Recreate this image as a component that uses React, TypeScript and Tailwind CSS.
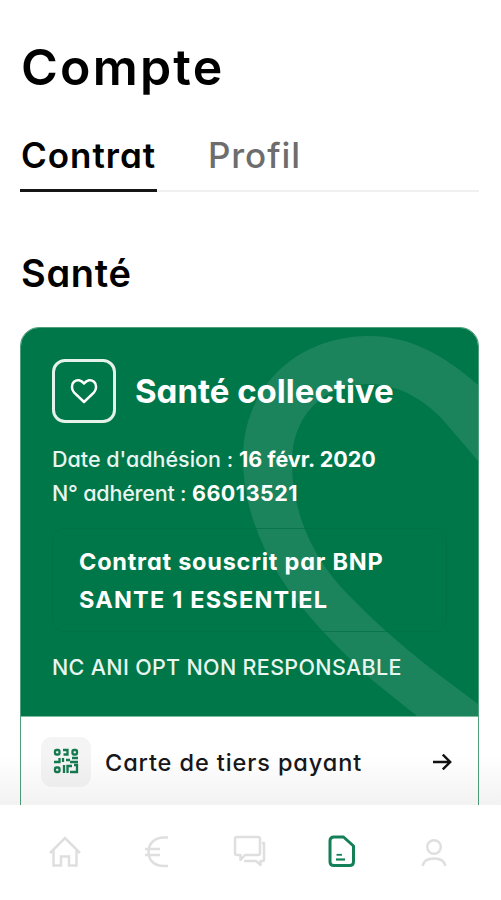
function ContractHeader() {
  return (
    <div className="relative h-[388px] overflow-hidden bg-[#007749] px-[31px] pt-[31px] text-white">
      {/* decorative ribbon behind the contract details */}
      <svg className="absolute inset-0 h-[388px] w-[457px]" viewBox="21 328 457 388" fill="#1c845d">
        <path d="M478 385C443 354 408 335 366 336C293 338 243 390 243 458C243 500 257 539 280 577C302 612 336 646 372 680L417 716H478V704L430 668C397 642 365 613 340 586C311 553 292 511 292 462C292 417 322 384 368 384C407 384 434 409 449 427Q464 444 478 461Z" />
      </svg>
      <div className="relative">
        <div className="flex items-center gap-[19px]">
          <div className="flex size-16 items-center justify-center rounded-[13px] border-[3px] border-[#e4f2eb]">
            <svg width="30" height="28" viewBox="0 0 30 28" fill="none" stroke="white" strokeWidth="2.5" strokeLinejoin="round">
              <path d="M15 25L5.200 15.600C2.200 12.300 2.200 7.300 5 4.800C8 2.300 12 2.700 15 6.600C18 2.700 22 2.300 25 4.800C27.800 7.300 27.800 12.300 24.800 15.600Z" />
            </svg>
          </div>
          <h3 className="text-[33px] leading-10 font-bold whitespace-nowrap">Santé collective</h3>
        </div>
        <p className="mt-[19px] text-[21.5px] leading-[34px] font-medium whitespace-nowrap text-[#e9f5ef]">
          Date d'adhésion : <b className="font-bold text-white">16 févr. 2020</b>
        </p>
        <p className="text-[21.5px] leading-[34px] font-medium tracking-[-0.2px] whitespace-nowrap text-[#e9f5ef]">
          N° adhérent : <b className="font-bold tracking-[0.5px] text-white">66013521</b>
        </p>
        <div className="mt-[18px] h-[104px] w-[395px] rounded-xl border border-[#006f43]/70 px-[26px] pt-[14px] text-[23.5px] leading-[38px] font-bold whitespace-nowrap">
          <div className="tracking-[0.77px]">Contrat souscrit par BNP</div>
          <div className="tracking-[1.2px]">SANTE 1 ESSENTIEL</div>
        </div>
        <p className="mt-[18px] text-[21.5px] leading-[34px] font-medium tracking-[0.33px] whitespace-nowrap text-[#e9f5ef]">NC ANI OPT NON RESPONSABLE</p>
      </div>
    </div>
  );
}

function CardRow() {
  return (
    <div className="flex h-[110px] items-start border-t border-[#7dbb9f] pt-5 pr-[26px] pl-5">
      <div className="flex size-[50px] items-center justify-center rounded-[11px] bg-[#f4f4f4]">
        <svg className="-mt-[3px]" width="26" height="26" viewBox="0 0 26 26" fill="none" stroke="#16794f" strokeWidth="2.3">
          <rect x="2" y="2" width="4.500" height="4.500" rx="1.500" />
          <rect x="19.500" y="2" width="4.500" height="4.500" rx="1.500" />
          <rect x="2" y="19.500" width="4.500" height="4.500" rx="1.500" />
          <path d="M10 2H14.500V6.500H10.500M1 14H6.500V10M10 10V14M13 12H17M19 10H25M17 14H25M11 17V25M14.500 25V18H19M21 17H24V24H17" />
        </svg>
      </div>
      <span className="mt-[7px] ml-[14px] text-[23.5px] leading-[38px] font-medium tracking-[0.9px] whitespace-nowrap text-[#17171b]">Carte de tiers payant</span>
      <svg className="mt-[15px] ml-auto" width="20" height="20" viewBox="0 0 20 20" fill="none" stroke="#111" strokeWidth="2.4">
        <path d="M1 10H18M10.8 2.6L18.2 10L10.8 17.4" />
      </svg>
    </div>
  );
}

function BottomNav() {
  return (
    <nav className="absolute inset-x-0 bottom-0">
      <div className="h-[50px] bg-gradient-to-b from-black/0 to-black/[0.05]" />
      <div className="flex h-[95px] items-start justify-between bg-white pt-[27px] pr-[49px] pl-[46px] text-[#dfdfdf]">
        <svg width="38" height="38" viewBox="0 0 38 38" fill="none" stroke="currentColor" strokeWidth="2.5">
          <path d="M4 21L19 6L34 21M7.500 18V33.500H15V24.500H23V33.500H30.500V18" />
        </svg>
        <svg width="38" height="38" viewBox="0 0 38 38" fill="none" stroke="currentColor" strokeWidth="2.5">
          <path d="M30 5.500H26C16 5.500 10.500 12 10.500 20S16 34 26 34H30M7 17H22M7 23H22" />
        </svg>
        <svg width="38" height="38" viewBox="0 0 38 38" fill="none" stroke="currentColor" strokeWidth="2.500" strokeLinejoin="round">
          <path d="M7 5H28Q30 5 30 7V21Q30 23 28 23H15L10.500 28V23H7Q5 23 5 21V7Q5 5 7 5ZM32 11H34V28Q34 29 33 29H30.500V33L26 29H14" />
        </svg>
        <svg width="38" height="38" viewBox="0 0 38 38" fill="none" stroke="#148057" strokeWidth="3" strokeLinejoin="round">
          <path d="M12 5H21.500L31.500 14V29.500Q31.500 33.500 27.500 33.500H12Q8 33.500 8 29.500V9Q8 5 12 5Z" />
          <path d="M14.500 22.800H20" strokeWidth="1.8" />
          <path d="M14 27.500H23" strokeWidth="2.2" />
        </svg>
        <svg width="38" height="38" viewBox="0 0 38 38" fill="none" stroke="currentColor" strokeWidth="2.4">
          <circle cx="20" cy="15" r="6.800" />
          <path d="M8.500 34C9.500 28.500 14 26.500 20 26.500S30.500 28.500 31.500 34" />
        </svg>
      </div>
    </nav>
  );
}

export default function App() {
  return (
    <div className="relative h-[900px] w-[501px] overflow-hidden bg-white px-5 pt-[36px] font-[Inter,sans-serif] [font-feature-settings:'cv11']">
      <h1 className="ml-px text-[50px] leading-[62px] font-semibold tracking-[2.2px] text-black">Compte</h1>
      <div className="relative mt-[34px] flex h-[60px] w-[459px] border-b-2 border-[#f0f0f0] text-[35px] leading-[46px] font-semibold">
        <div className="-mb-[2px] h-[60px] w-[137px] border-b-3 border-[#161616] pl-px tracking-[1px] text-black">Contrat</div>
        <div className="ml-[51px] font-medium tracking-[0.9px] text-[#6d6d6d]">Profil</div>
      </div>
      <h2 className="mt-[56px] ml-px text-[38px] leading-[50px] font-semibold tracking-[0.7px] text-black">Santé</h2>
      <section className="mt-[29px] w-[459px] overflow-hidden rounded-t-[19px] border border-[#4f9f7c]">
        <ContractHeader />
        <CardRow />
      </section>
      <BottomNav />
    </div>
  );
}
